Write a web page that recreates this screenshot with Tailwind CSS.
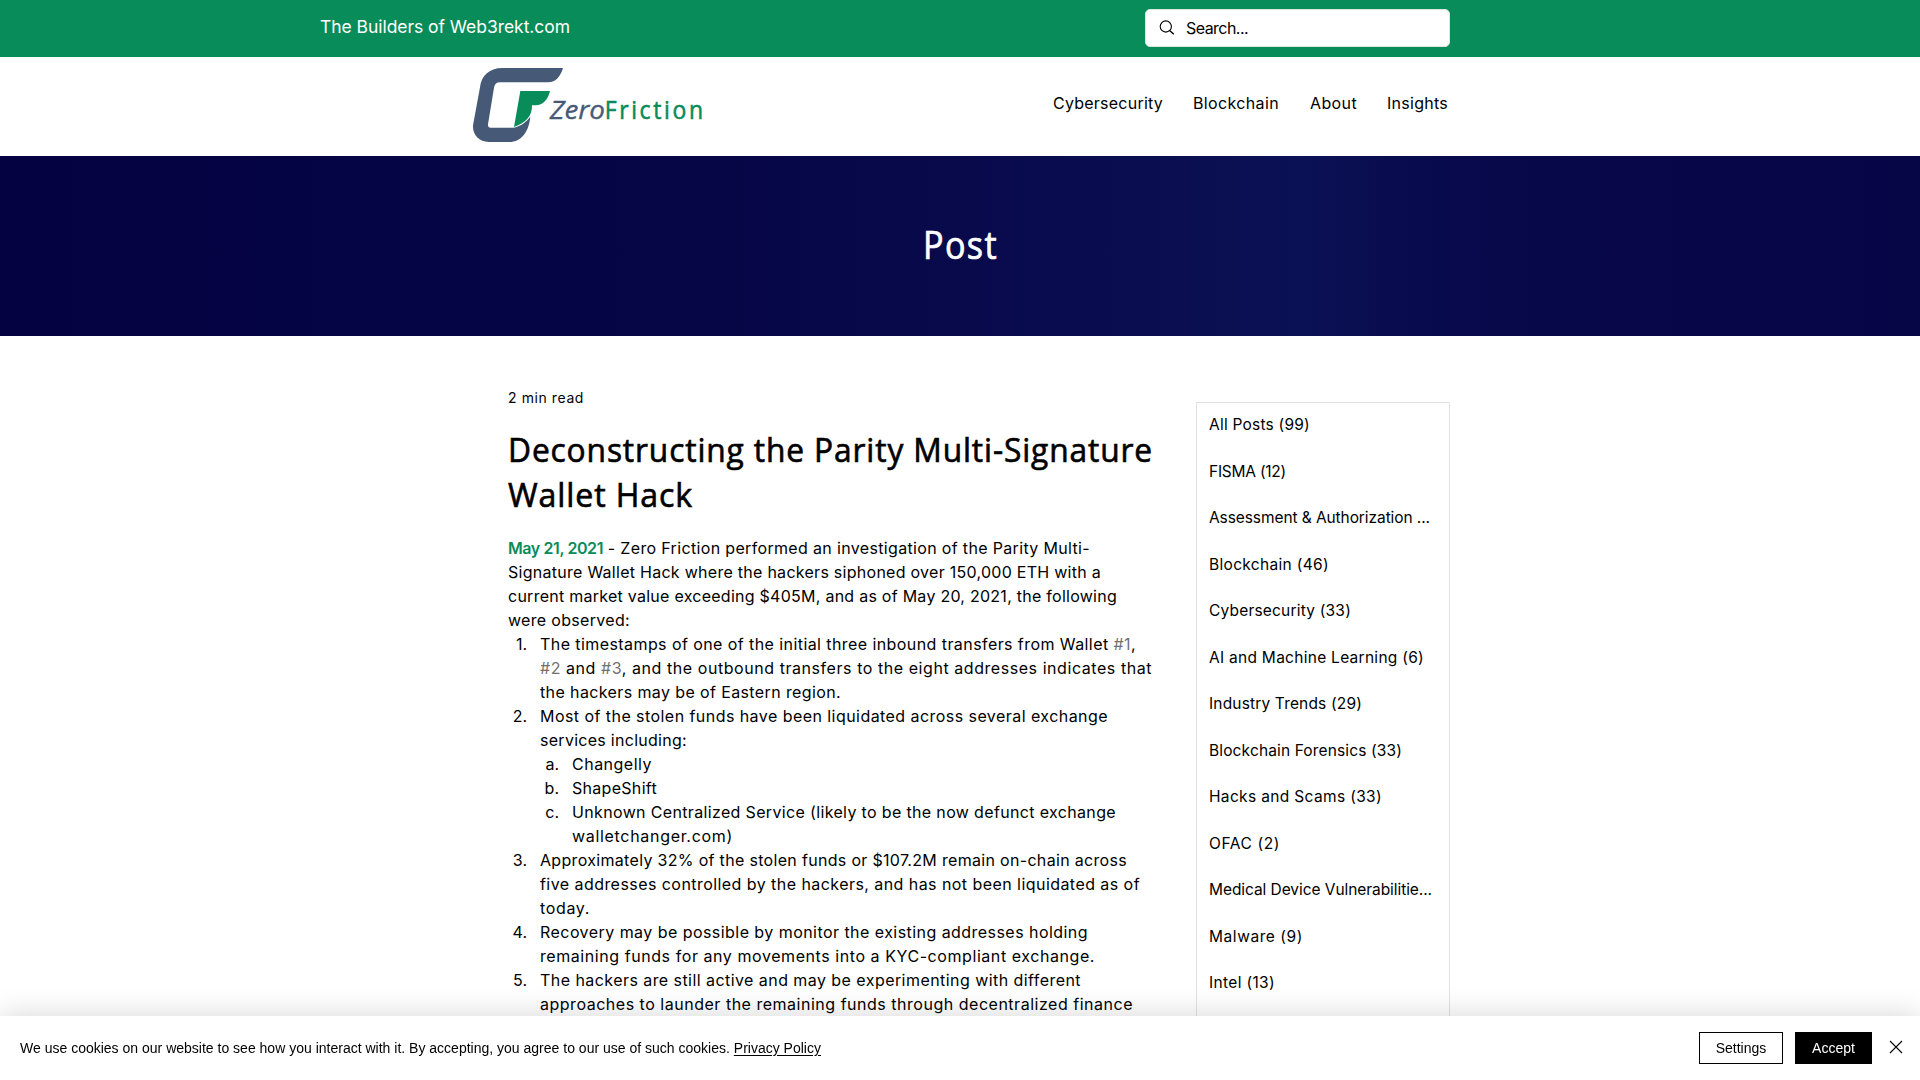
<!DOCTYPE html>
<html lang="en">
<head>
<meta charset="utf-8">
<title>Deconstructing the Parity Multi-Signature Wallet Hack</title>
<script src="https://cdn.jsdelivr.net/npm/@tailwindcss/browser@4"></script>
</head>
<body class="h-[1080px] overflow-hidden bg-white font-[Inter,sans-serif] text-base leading-6 text-black">
<div class="flex h-[57px] items-start justify-between bg-[#088c59] pr-[470px] pl-[320px]">
  <p class="pt-[14px] text-[17.5px] leading-[26px] whitespace-nowrap text-white"><span data-w="250">The Builders of Web3rekt.com</span></p>
  <div class="mt-[9px] flex h-[38px] w-[305px] items-center rounded-[5px] border border-[#dfe5e2] bg-white pl-[13px]">
    <svg class="h-4 w-4" viewBox="0 0 16 16" fill="none" stroke="#000" stroke-width="1.1"><circle cx="6.8" cy="6.5" r="5.6"/><path d="M10.6 10.4 14.8 14.2" stroke-width="1.4"/></svg>
    <span class="ml-[11px] whitespace-nowrap" data-w="62">Search...</span>
  </div>
</div>
<header class="flex h-[99px] items-start pl-[460px]">
  <svg class="mt-[3px] h-[90px] w-[260px]" viewBox="0 0 780 270">
    <path fill="#465a78" d="M309 24H128C86 24 64 48 60 82L39 196C37 224 57 246 86 246H148C184 246 207 214 211 170C198 187 181 199 160 203H92C86 203 83 199 84 193L102 83C104 72 110 67 120 67H264C288 67 302 48 309 24Z"/>
    <path fill="#088c59" d="M181 93H270C264 118 249 136 227 136H216C217 168 198 188 162 201Z"/>
    <text x="269" y="178" font-family="Open Sans, sans-serif" font-style="italic" font-size="79" fill="#465a78" stroke="#465a78" stroke-width="1" textLength="166" lengthAdjust="spacingAndGlyphs">Zero</text>
    <text x="434" y="178" font-family="Open Sans, sans-serif" font-size="79" letter-spacing="9" fill="#088c59" stroke="#088c59" stroke-width="1.8" textLength="303" lengthAdjust="spacingAndGlyphs">Friction</text>
  </svg>
  <nav class="mt-[34px] ml-[333px] flex whitespace-nowrap">
    <a class="w-[140px]"><span data-w="110">Cybersecurity</span></a>
    <a class="w-[117px]"><span data-w="86">Blockchain</span></a>
    <a class="w-[77px]"><span data-w="47">About</span></a>
    <a><span data-w="61">Insights</span></a>
  </nav>
</header>
<section class="flex h-[180px] justify-center bg-[linear-gradient(90deg,#040241_0%,#050444_20%,#060647_38%,#080a4c_50%,#0a0e51_60%,#0b1155_68%,#080b4e_74%,#07084a_80%,#070648_90%,#060546_100%)]">
  <h1 class="w-[74px] pt-[65px] font-['Open_Sans',sans-serif] text-[37.5px] leading-[48px] tracking-[1.5px] whitespace-nowrap text-white [-webkit-text-stroke:0.7px]"><span class="inline-block origin-left" data-scale="75">Post</span></h1>
</section>
<main class="flex items-start pl-[508px]">
  <article class="w-[688px] shrink-0 whitespace-nowrap">
    <p class="pt-[51px] text-sm leading-[22px]"><span data-w="76">2 min read</span></p>
    <h2 class="mt-[18px] font-['Open_Sans',sans-serif] text-[33px] leading-[45px] tracking-[0.9px] [-webkit-text-stroke:0.65px]"><span class="inline-block origin-left" data-scale="645">Deconstructing the Parity Multi-Signature</span><br><span class="inline-block origin-left" data-scale="185">Wallet Hack</span></h2>
    <div class="mt-[19px]">
      <p><span class="font-semibold text-[#088c59]" data-w="95">May 21, 2021</span><span data-w="487">&nbsp;- Zero Friction performed an investigation of the Parity Multi-</span><br>
      <span data-w="593">Signature Wallet Hack where the hackers siphoned over 150,000 ETH with a</span><br>
      <span data-w="609">current market value exceeding $405M, and as of May 20, 2021, the following</span><br>
      <span data-w="122">were observed:</span></p>
      <ol>
        <li class="flex"><span class="mr-[13px] w-[19px] shrink-0 text-right">1.</span><div><span data-w="596">The timestamps of one of the initial three inbound transfers from Wallet <a class="text-[#717070]">#1</a>,</span><br><span data-w="612"><a class="text-[#717070]">#2</a> and <a class="text-[#717070]">#3</a>, and the outbound transfers to the eight addresses indicates that</span><br><span data-w="301">the hackers may be of Eastern region.</span></div></li>
        <li class="flex"><span class="mr-[13px] w-[19px] shrink-0 text-right">2.</span><div><span data-w="568">Most of the stolen funds have been liquidated across several exchange</span><br><span data-w="147">services including:</span></div></li>
        <li>
          <ol class="pl-8">
            <li class="flex"><span class="mr-[13px] w-[19px] shrink-0 text-right">a.</span><span data-w="80">Changelly</span></li>
            <li class="flex"><span class="mr-[13px] w-[19px] shrink-0 text-right">b.</span><span data-w="85">ShapeShift</span></li>
            <li class="flex"><span class="mr-[13px] w-[19px] shrink-0 text-right">c.</span><div><span data-w="544">Unknown Centralized Service (likely to be the now defunct exchange</span><br><span data-w="161">walletchanger.com)</span></div></li>
          </ol>
        </li>
        <li class="flex"><span class="mr-[13px] w-[19px] shrink-0 text-right">3.</span><div><span data-w="587">Approximately 32% of the stolen funds or $107.2M remain on-chain across</span><br><span data-w="600">five addresses controlled by the hackers, and has not been liquidated as of</span><br><span data-w="50">today.</span></div></li>
        <li class="flex"><span class="mr-[13px] w-[19px] shrink-0 text-right">4.</span><div><span data-w="548">Recovery may be possible by monitor the existing addresses holding</span><br><span data-w="555">remaining funds for any movements into a KYC-compliant exchange.</span></div></li>
        <li class="flex"><span class="mr-[13px] w-[19px] shrink-0 text-right">5.</span><div><span data-w="541">The hackers are still active and may be experimenting with different</span><br><span data-w="593">approaches to launder the remaining funds through decentralized finance</span></div></li>
      </ol>
    </div>
  </article>
  <aside class="mt-[66px] h-[700px] w-[254px] shrink-0 border border-[#e2e2e2] pl-3 text-[15.5px] leading-[46.5px] whitespace-nowrap">
    <ul class="-mt-px">
      <li><span data-w="101">All Posts (99)</span></li>
      <li><span data-w="77">FISMA (12)</span></li>
      <li><span data-w="221">Assessment &amp; Authorization ...</span></li>
      <li><span data-w="120">Blockchain (46)</span></li>
      <li><span data-w="142">Cybersecurity (33)</span></li>
      <li><span data-w="215">AI and Machine Learning (6)</span></li>
      <li><span data-w="153">Industry Trends (29)</span></li>
      <li><span data-w="193">Blockchain Forensics (33)</span></li>
      <li><span data-w="173">Hacks and Scams (33)</span></li>
      <li><span data-w="71">OFAC (2)</span></li>
      <li><span data-w="223">Medical Device Vulnerabilitie...</span></li>
      <li><span data-w="94">Malware (9)</span></li>
      <li><span data-w="66">Intel (13)</span></li>
    </ul>
  </aside>
</main>
<div class="fixed inset-x-0 bottom-0 flex h-16 items-center bg-white pr-[18px] pl-5 font-['Liberation_Sans',Arial,sans-serif] text-sm shadow-[0_0_30px_rgba(0,0,0,0.17)]">
  <p class="flex-1 whitespace-nowrap"><span data-w="801">We use cookies on our website to see how you interact with it. By accepting, you agree to our use of such cookies. <a class="underline underline-offset-2">Privacy Policy</a></span></p>
  <button class="h-8 w-[84px] border border-black">Settings</button>
  <button class="ml-3 h-8 w-[77px] bg-black text-white">Accept</button>
  <svg class="mb-[2px] ml-[18px] h-3 w-3 overflow-visible" viewBox="0 0 12 12" stroke="#000" stroke-width="1.1"><path d="M0 0 12 12M12 0 0 12"/></svg>
</div>
<script>
// Fit each line of text to its own measure, in px.
function measure(el) {
  var range = document.createRange();
  range.selectNodeContents(el);
  return range.getBoundingClientRect().width;
}
function fit() {
  document.querySelectorAll('[data-w]').forEach(function (el) {
    el.style.letterSpacing = '0px';
    el.style.letterSpacing = (parseFloat(el.dataset.w) - measure(el)) / el.textContent.length + 'px';
  });
  document.querySelectorAll('[data-scale]').forEach(function (el) {
    el.style.transform = 'none';
    el.style.transform = 'scaleX(' + parseFloat(el.dataset.scale) / measure(el) + ')';
  });
}
fit();
window.addEventListener('load', fit);
document.fonts.ready.then(fit);
requestAnimationFrame(function () { requestAnimationFrame(fit); });
setTimeout(fit, 100);
</script>
</body>
</html>
